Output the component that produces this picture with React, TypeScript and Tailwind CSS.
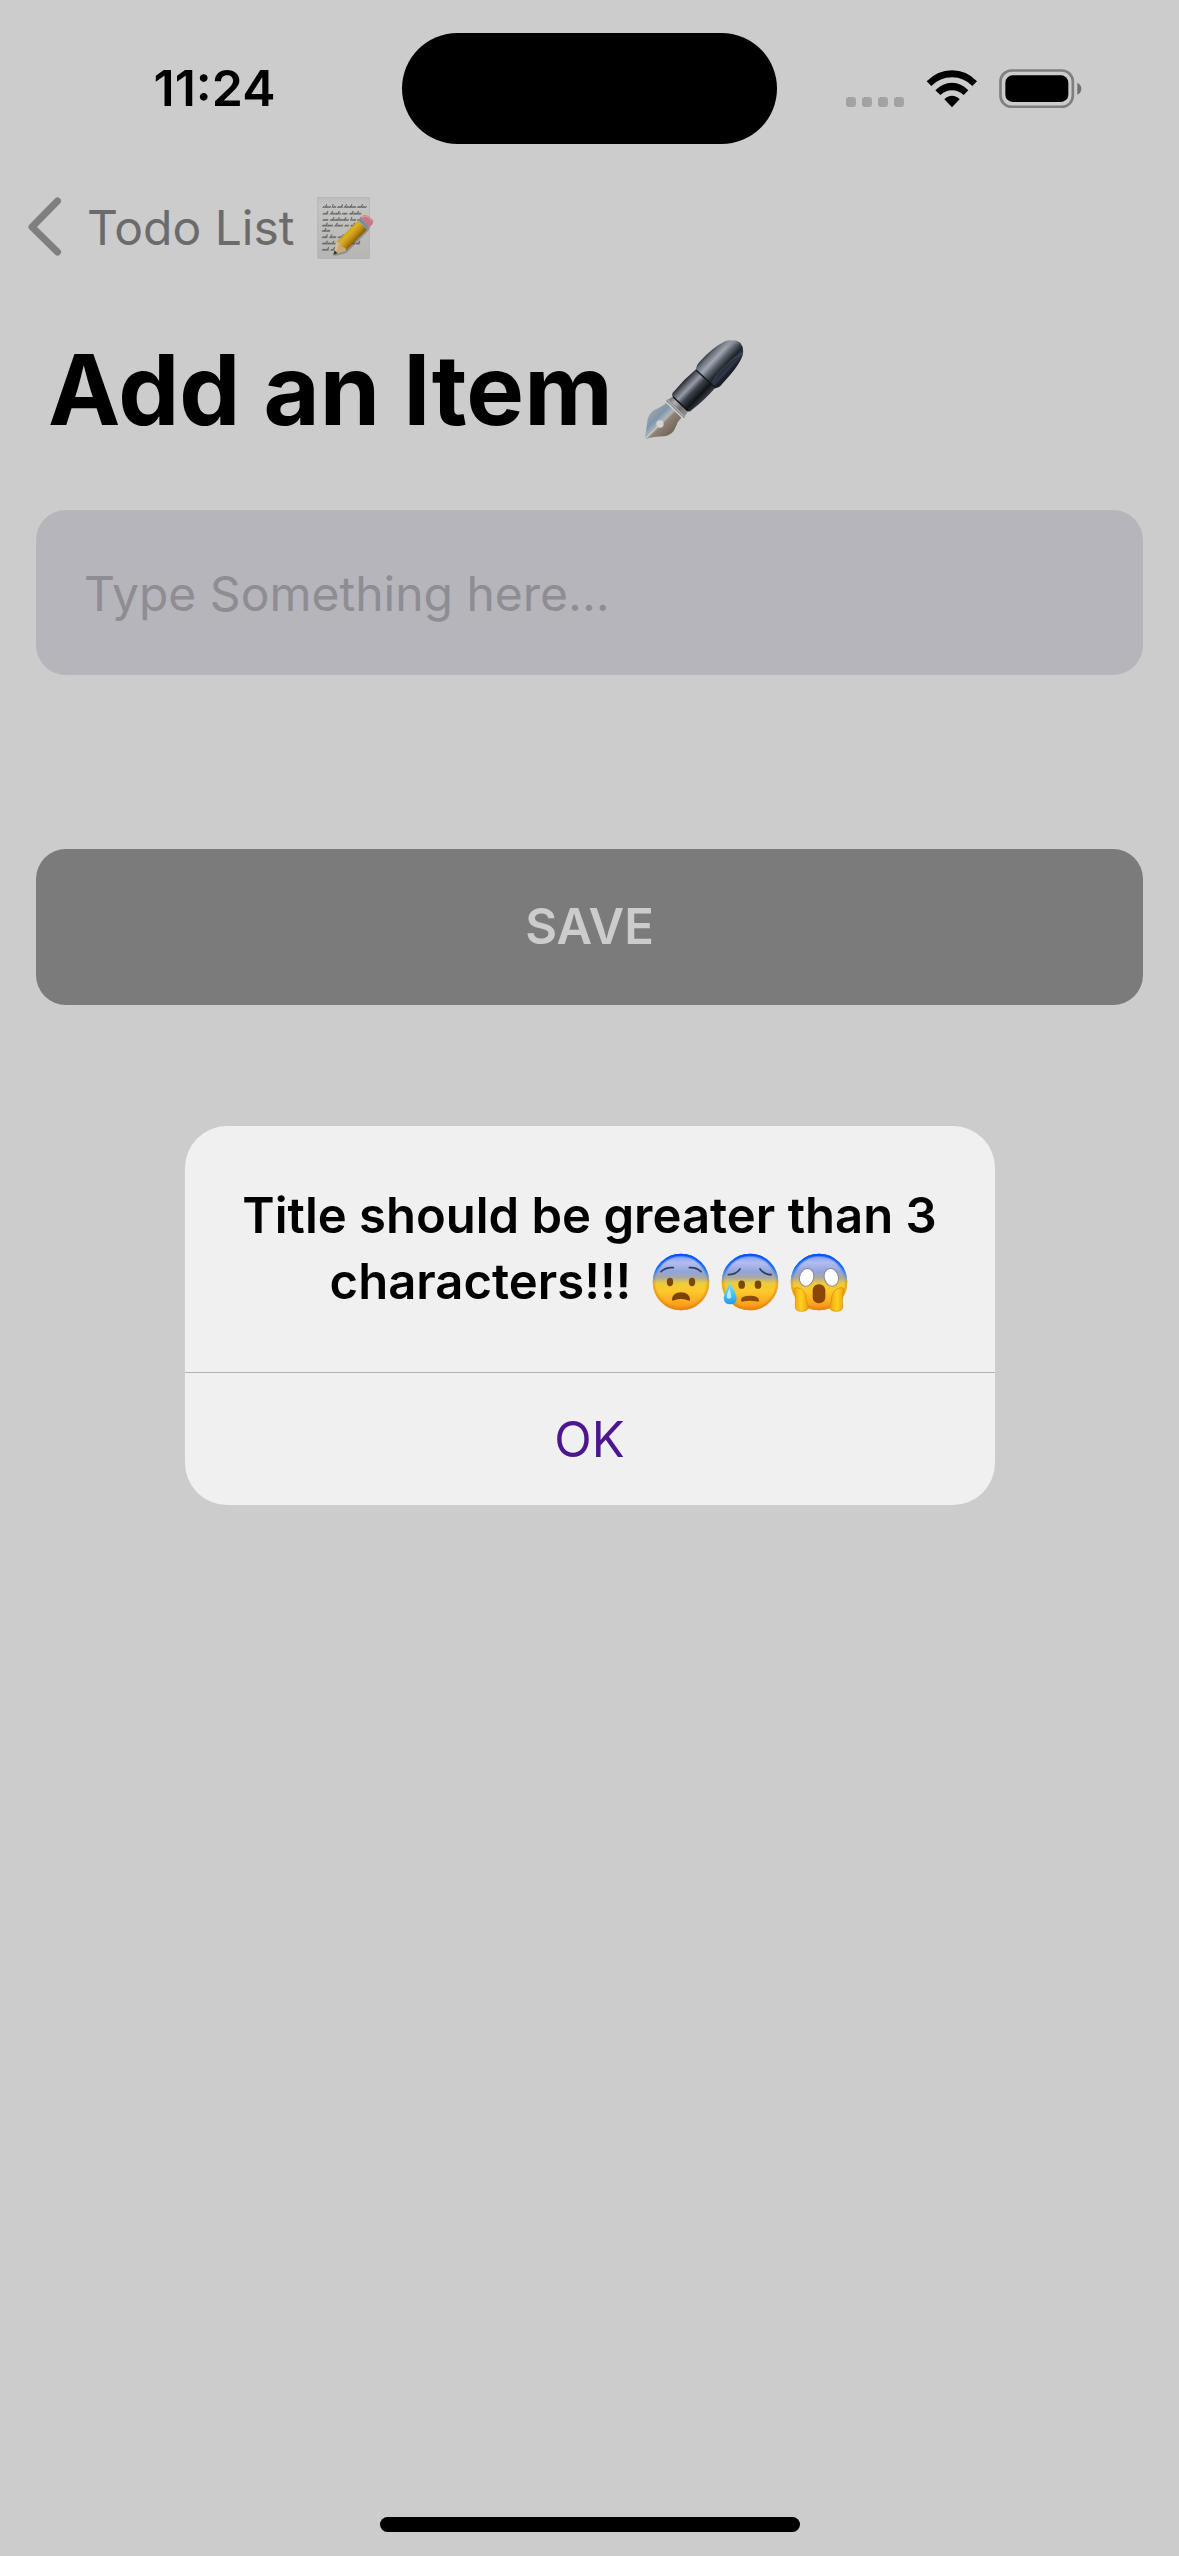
import React from "react";

function SignalDots() {
  return (
    <svg className="h-[38px] w-[58px]" viewBox="0 0 58 38" fill="#a3a3a3" aria-hidden="true">
      {[0, 16, 32, 48].map((x) => (
        <rect key={x} x={x} y="27" width="10" height="10" rx="3" />
      ))}
    </svg>
  );
}

function WifiIcon() {
  return (
    <svg className="h-[38px] w-[52px]" viewBox="438 146 154 114" aria-hidden="true">
      <path d="M439 180 Q471 147 515 147 Q559 147 590 180 L576 194 Q550 168 515 168 Q479 168 453 194 Z" />
      <path d="M465 207 Q487 184 515 184 Q543 184 564 207 L550 221 Q535 207 515 207 Q495 207 480 221 Z" />
      <path d="M492 234 Q502 223 515 223 Q528 223 538 234 L515 258 Z" />
    </svg>
  );
}

function BatteryIcon() {
  return (
    <svg className="h-[39px] w-[83px]" viewBox="656 143 249 117" aria-hidden="true">
      <rect x="660.5" y="147.5" width="217" height="109" rx="33" fill="none" stroke="#7f7f7f" strokeWidth="8" />
      <rect x="675" y="162" width="189" height="80" rx="22" />
      <path d="M891 184 Q903 190 903 202 Q903 214 891 220 Z" fill="#707070" />
    </svg>
  );
}

// Handwriting on the memo page: start x, baseline y, word widths.
const WORDS: [number, number, number[]][] = [
  [66, 77, [22, 10, 14, 34, 28]],
  [66, 97, [16, 30, 16, 34]],
  [66, 116, [16, 56, 14, 16]],
  [64, 133, [32, 24, 12, 16]],
  [64, 149, [22]],
  [64, 168, [16, 20, 14]],
  [64, 187, [40, 14, 30, 12]],
  [64, 206, [20, 18]],
];

function scribble(x: number, y: number, words: number[]) {
  let d = "";
  let p = x;
  words.forEach((w, n) => {
    d += `M${p} ${y + 4}`;
    for (let i = 0; i < w / 4; i += 1) {
      const rise = (i * 7 + n * 5 + y) % 9 < 2 ? 12 : 6;
      d += ` q3 ${-rise} 4 ${-rise + 1} q-2 ${rise - 2} 0 ${rise - 1}`;
    }
    p += w + 6;
  });
  return d;
}

function MemoEmoji() {
  return (
    <svg className="h-[62px] w-[57px]" viewBox="50 48 170 187" role="img" aria-label="memo">
      <defs>
        <linearGradient id="memo-paper" x1="0" y1="0" x2="0" y2="1">
          <stop offset="0" stopColor="#bdbdbb" />
          <stop offset="0.15" stopColor="#c4c4c2" />
          <stop offset="1" stopColor="#b5b5b3" />
        </linearGradient>
        <linearGradient id="memo-pencil" gradientUnits="userSpaceOnUse" x1="138" y1="148" x2="168" y2="176">
          <stop offset="0" stopColor="#c79c1c" />
          <stop offset="0.3" stopColor="#d9b02a" />
          <stop offset="0.6" stopColor="#c99615" />
          <stop offset="1" stopColor="#8f6206" />
        </linearGradient>
      </defs>
      <rect x="51.5" y="49.5" width="156" height="184" fill="url(#memo-paper)" stroke="#a9a9a7" strokeWidth="1.5" />
      <g fill="none" stroke="#3f3f3f" strokeWidth="1.5">
        {WORDS.map(([x, y, words]) => (
          <path key={y} d={scribble(x, y, words)} />
        ))}
      </g>
      <path d="M103 226 L138 217 L204 150 L219 118 L210 112 L100 216 Z" fill="#000" opacity="0.22" />
      <path d="M173 119 L200 146 L135 211 L108 184 Z" fill="url(#memo-pencil)" />
      <path d="M108 184 L122 187 L124 198 L135 201 L137 211 L99 222 Z" fill="#c9a879" />
      <path d="M108 184 L115 186 L106 219 L99 222 Z" fill="#d9bd92" />
      <path d="M102 209 L111 217 L98 224 Z" fill="#2c3438" />
      <path d="M173 119 L181 111 L206 136 L200 146 Z" fill="#8293a6" />
      <path d="M177 115 L203 141" stroke="#5f7288" strokeWidth="2" />
      <path d="M181 111 Q187 100 197 103 Q215 108 218 125 Q217 134 206 137 Z" fill="#c97780" />
      <path d="M185 110 Q191 104 198 106 Q209 110 213 119" fill="none" stroke="#dc9ba0" strokeWidth="4" />
    </svg>
  );
}

function FountainPenEmoji() {
  return (
    <svg className="h-[102px] w-[102px]" viewBox="58 56 306 306" role="img" aria-label="fountain pen">
      <defs>
        <linearGradient id="pen-cap" gradientUnits="userSpaceOnUse" x1="248" y1="100" x2="312" y2="160">
          <stop offset="0" stopColor="#2b2f36" />
          <stop offset="0.12" stopColor="#646b74" />
          <stop offset="0.34" stopColor="#a0a8b2" />
          <stop offset="0.52" stopColor="#5d656f" />
          <stop offset="0.74" stopColor="#20252b" />
          <stop offset="0.9" stopColor="#2d3a4c" />
          <stop offset="1" stopColor="#1a1f27" />
        </linearGradient>
        <linearGradient id="pen-barrel" gradientUnits="userSpaceOnUse" x1="180" y1="182" x2="238" y2="238">
          <stop offset="0" stopColor="#272b31" />
          <stop offset="0.15" stopColor="#5c636d" />
          <stop offset="0.32" stopColor="#969da6" />
          <stop offset="0.52" stopColor="#3d434c" />
          <stop offset="0.8" stopColor="#101317" />
          <stop offset="1" stopColor="#343a42" />
        </linearGradient>
        <linearGradient id="pen-nib" gradientUnits="userSpaceOnUse" x1="90" y1="275" x2="145" y2="330">
          <stop offset="0" stopColor="#9aa0a5" />
          <stop offset="0.25" stopColor="#7c96ae" />
          <stop offset="0.5" stopColor="#b5b7b6" />
          <stop offset="0.6" stopColor="#8f8275" />
          <stop offset="1" stopColor="#75685c" />
        </linearGradient>
        <linearGradient id="pen-ring" gradientUnits="userSpaceOnUse" x1="133" y1="237" x2="185" y2="288">
          <stop offset="0" stopColor="#6c6f72" />
          <stop offset="0.3" stopColor="#b0b2b4" />
          <stop offset="0.6" stopColor="#6f7174" />
          <stop offset="1" stopColor="#929497" />
        </linearGradient>
      </defs>
      <path d="M127 248 Q118 256 104 263 Q78 273 72 295 Q68 330 63 357 Q90 348 122 348 Q147 345 156 320 Q162 302 173 292 Z" fill="url(#pen-nib)" />
      <path d="M63 357 L104 316" stroke="#d6d6d6" strokeWidth="3" />
      <circle cx="109" cy="311" r="11" fill="#d3d4d4" />
      <path d="M146 229 L193 274 L180 292 L128 243 Z" fill="url(#pen-ring)" />
      <path d="M128 240 L134 237 L184 287 L181 293 Z" fill="#a1a3a6" stroke="#6d6f72" strokeWidth="1" />
      <path d="M217 147 L275 202 Q242 240 204 269 Q198 277 190 271 L146 228 Q143 220 152 212 Q180 178 217 147 Z" fill="url(#pen-barrel)" />
      <path d="M148 229 L192 271" stroke="#0d0f12" strokeWidth="4" />
      <path d="M217 148 Q218 133 230 122 Q268 80 306 62 Q334 54 350 67 Q362 82 357 105 Q346 138 296 190 Q286 203 275 203 Z" fill="url(#pen-cap)" />
      <path d="M217 149 L276 203" stroke="#121519" strokeWidth="4" />
      <path d="M304 66 Q333 57 347 70 Q330 68 308 78 Z" fill="#7f8a98" opacity="0.45" />
      <path d="M356 97 Q330 112 300 142 Q280 161 267 184" fill="none" stroke="#6b747e" strokeWidth="2" opacity="0.7" />
    </svg>
  );
}

function FaceGradients() {
  return (
    <svg className="absolute size-0" aria-hidden="true">
      <defs>
        <linearGradient id="face-skin" x1="0" y1="0" x2="0" y2="1">
          <stop offset="0" stopColor="#3d78fa" />
          <stop offset="0.07" stopColor="#8ea8f6" />
          <stop offset="0.16" stopColor="#b4bcf0" />
          <stop offset="0.32" stopColor="#93a3da" />
          <stop offset="0.42" stopColor="#a8a9a6" />
          <stop offset="0.52" stopColor="#eccb38" />
          <stop offset="0.66" stopColor="#fdc92b" />
          <stop offset="0.84" stopColor="#fdac20" />
          <stop offset="1" stopColor="#ee8b13" />
        </linearGradient>
        <linearGradient id="face-edge" x1="0" y1="0" x2="0" y2="1">
          <stop offset="0" stopColor="#0552fc" />
          <stop offset="0.25" stopColor="#1a74f8" />
          <stop offset="0.42" stopColor="#6d97c0" stopOpacity="0.6" />
          <stop offset="0.52" stopColor="#e59a1c" stopOpacity="0.5" />
          <stop offset="1" stopColor="#e88610" stopOpacity="0.8" />
        </linearGradient>
        <linearGradient id="face-tear" x1="0" y1="0" x2="0" y2="1">
          <stop offset="0" stopColor="#8adcf8" />
          <stop offset="0.5" stopColor="#4fc4f6" />
          <stop offset="1" stopColor="#1b9bea" />
        </linearGradient>
        <linearGradient id="face-hand" x1="0" y1="0" x2="1" y2="0">
          <stop offset="0" stopColor="#f0a012" />
          <stop offset="0.5" stopColor="#ffd21c" />
          <stop offset="1" stopColor="#f0a012" />
        </linearGradient>
      </defs>
    </svg>
  );
}

function Face({ label, children }: { label: string; children: React.ReactNode }) {
  return (
    <svg className="h-[60px] w-[60px]" viewBox="0 0 180 180" role="img" aria-label={label}>
      <circle cx="90" cy="90" r="85" fill="url(#face-skin)" />
      <circle cx="90" cy="90" r="80" fill="none" stroke="url(#face-edge)" strokeWidth="10" opacity="0.4" />
      <circle cx="90" cy="90" r="82" fill="none" stroke="url(#face-edge)" strokeWidth="6" />
      {children}
    </svg>
  );
}

function FearfulFace() {
  return (
    <Face label="fearful face">
      <path d="M30 59 Q44 45 67 47" fill="none" stroke="#2b4260" strokeWidth="5" strokeLinecap="round" />
      <path d="M150 59 Q136 45 115 47" fill="none" stroke="#2b4260" strokeWidth="5" strokeLinecap="round" />
      <ellipse cx="57" cy="90" rx="9.5" ry="12.5" fill="#7b4703" />
      <ellipse cx="123" cy="90" rx="9.5" ry="12.5" fill="#7b4703" />
      <path d="M63 144 Q64 121 90 121 Q116 121 117 144 Q116 148 108 144 Q90 138 72 144 Q64 148 63 144 Z" fill="#7d4305" />
    </Face>
  );
}

function SweatFace() {
  return (
    <Face label="anxious face with sweat">
      <path d="M25 68 Q48 68 60 51" fill="none" stroke="#2b4260" strokeWidth="5" strokeLinecap="round" />
      <path d="M154 68 Q132 68 120 51" fill="none" stroke="#2b4260" strokeWidth="5" strokeLinecap="round" />
      <ellipse cx="65" cy="98" rx="10" ry="12.5" fill="#7b4703" />
      <ellipse cx="114" cy="98" rx="10" ry="12.5" fill="#7b4703" />
      <path d="M63 146 Q62 131 90 131 Q117 131 117 146 Q116 151 108 148 Q90 144 72 148 Q64 151 63 146 Z" fill="#8a4a08" />
      <path d="M30 92 Q50 124 50 140 Q49 157 31 157 Q12 157 11 138 Q12 124 30 92 Z" fill="url(#face-tear)" />
      <path d="M29 108 Q20 126 20 136 Q26 144 34 136 Z" fill="#d8f5ff" opacity="0.8" />
    </Face>
  );
}

function ScreamFace() {
  return (
    <Face label="face screaming in fear">
      <ellipse cx="53" cy="76" rx="21" ry="27" fill="#fff" stroke="#8a8a96" strokeWidth="3" transform="rotate(16 53 76)" />
      <ellipse cx="127" cy="76" rx="21" ry="27" fill="#fff" stroke="#8a8a96" strokeWidth="3" transform="rotate(-16 127 76)" />
      <rect x="71" y="97" width="38" height="57" rx="18" fill="#8a4607" />
      <path d="M15 110 Q22 103 34 110 Q50 117 52 138 Q52 148 56 158 Q62 178 38 178 Q20 178 19 166 Q21 130 15 110 Z" fill="url(#face-hand)" stroke="#d98a0c" strokeWidth="2" />
      <path d="M165 110 Q158 103 146 110 Q130 117 128 138 Q128 148 124 158 Q118 178 142 178 Q160 178 161 166 Q159 130 165 110 Z" fill="url(#face-hand)" stroke="#d98a0c" strokeWidth="2" />
    </Face>
  );
}

function StatusBar() {
  return (
    <div className="grid h-[162px] grid-cols-[minmax(0,1fr)_375px_minmax(0,1fr)] items-start pt-[33px]">
      <div className="flex h-[111px] items-center justify-center pl-[27px] text-[50px] font-semibold">
        <time>11:24</time>
      </div>
      <div className="h-[111px] rounded-full bg-black" />
      <div className="flex h-[111px] items-center pl-[69px]">
        <SignalDots />
        <div className="ml-[22px]">
          <WifiIcon />
        </div>
        <div className="ml-[21px]">
          <BatteryIcon />
        </div>
      </div>
    </div>
  );
}

export default function App() {
  return (
    <div className="relative flex min-h-screen flex-col bg-[#cccccc] font-['Inter','Liberation_Sans',sans-serif] text-black">
      <StatusBar />

      <nav className="flex h-[132px] items-center pl-[27px]">
        <a href="#todo-list" className="flex items-center text-[48px] leading-[60px] text-[#6b6b6b]">
          <svg className="h-[66px] w-[35px]" viewBox="0 0 35 66" fill="none" stroke="#7f7f7f" strokeWidth="7" strokeLinecap="round" strokeLinejoin="round" aria-hidden="true">
            <path d="M30.5 6 L5 32 L30.5 57" />
          </svg>
          <span className="ml-[25px]">Todo List</span>
          <span className="ml-[22px]">
            <MemoEmoji />
          </span>
        </a>
      </nav>

      <header className="flex h-[192px] items-center px-12">
        <h1 className="flex items-center gap-[30px] text-[97px] leading-[120px] font-bold">
          Add an Item
          <FountainPenEmoji />
        </h1>
      </header>

      <main className="flex flex-col px-9 pt-6">
        <input
          type="text"
          aria-label="Item title"
          placeholder="Type Something here..."
          className="h-[165px] w-full rounded-[30px] bg-[#b6b5bb] px-12 pt-[2px] text-[48px] outline-none placeholder:text-[#8e8d93]"
        />
        <button type="button" className="mt-[174px] h-[156px] w-full rounded-[30px] bg-[#7b7b7b] text-[49px] font-semibold text-[#cccccc]">
          SAVE
        </button>
      </main>

      <footer className="mt-auto flex justify-center pb-6">
        <div className="h-[15px] w-[420px] rounded-full bg-black" />
      </footer>

      <div className="absolute inset-0 flex items-center justify-center pt-[177px] pb-[102px]">
        <div role="alertdialog" aria-modal="true" aria-labelledby="alert-title" className="w-[810px] overflow-hidden rounded-[42px] bg-[#f0f0f0]">
          <FaceGradients />
          <h2 id="alert-title" className="px-12 pt-[57px] pb-[57px] text-center text-[49px] leading-[66px] font-semibold">
            <span className="block">Title should be greater than 3</span>
            <span className="flex items-center justify-center">
              characters!!!
              <span className="ml-[20px] flex gap-[9px]">
                <FearfulFace />
                <SweatFace />
                <ScreamFace />
              </span>
            </span>
          </h2>
          <button type="button" className="h-[133px] w-full border-t border-[#b0b0b0] pt-[2px] text-[49px] text-[#4d158e]">
            OK
          </button>
        </div>
      </div>
    </div>
  );
}
